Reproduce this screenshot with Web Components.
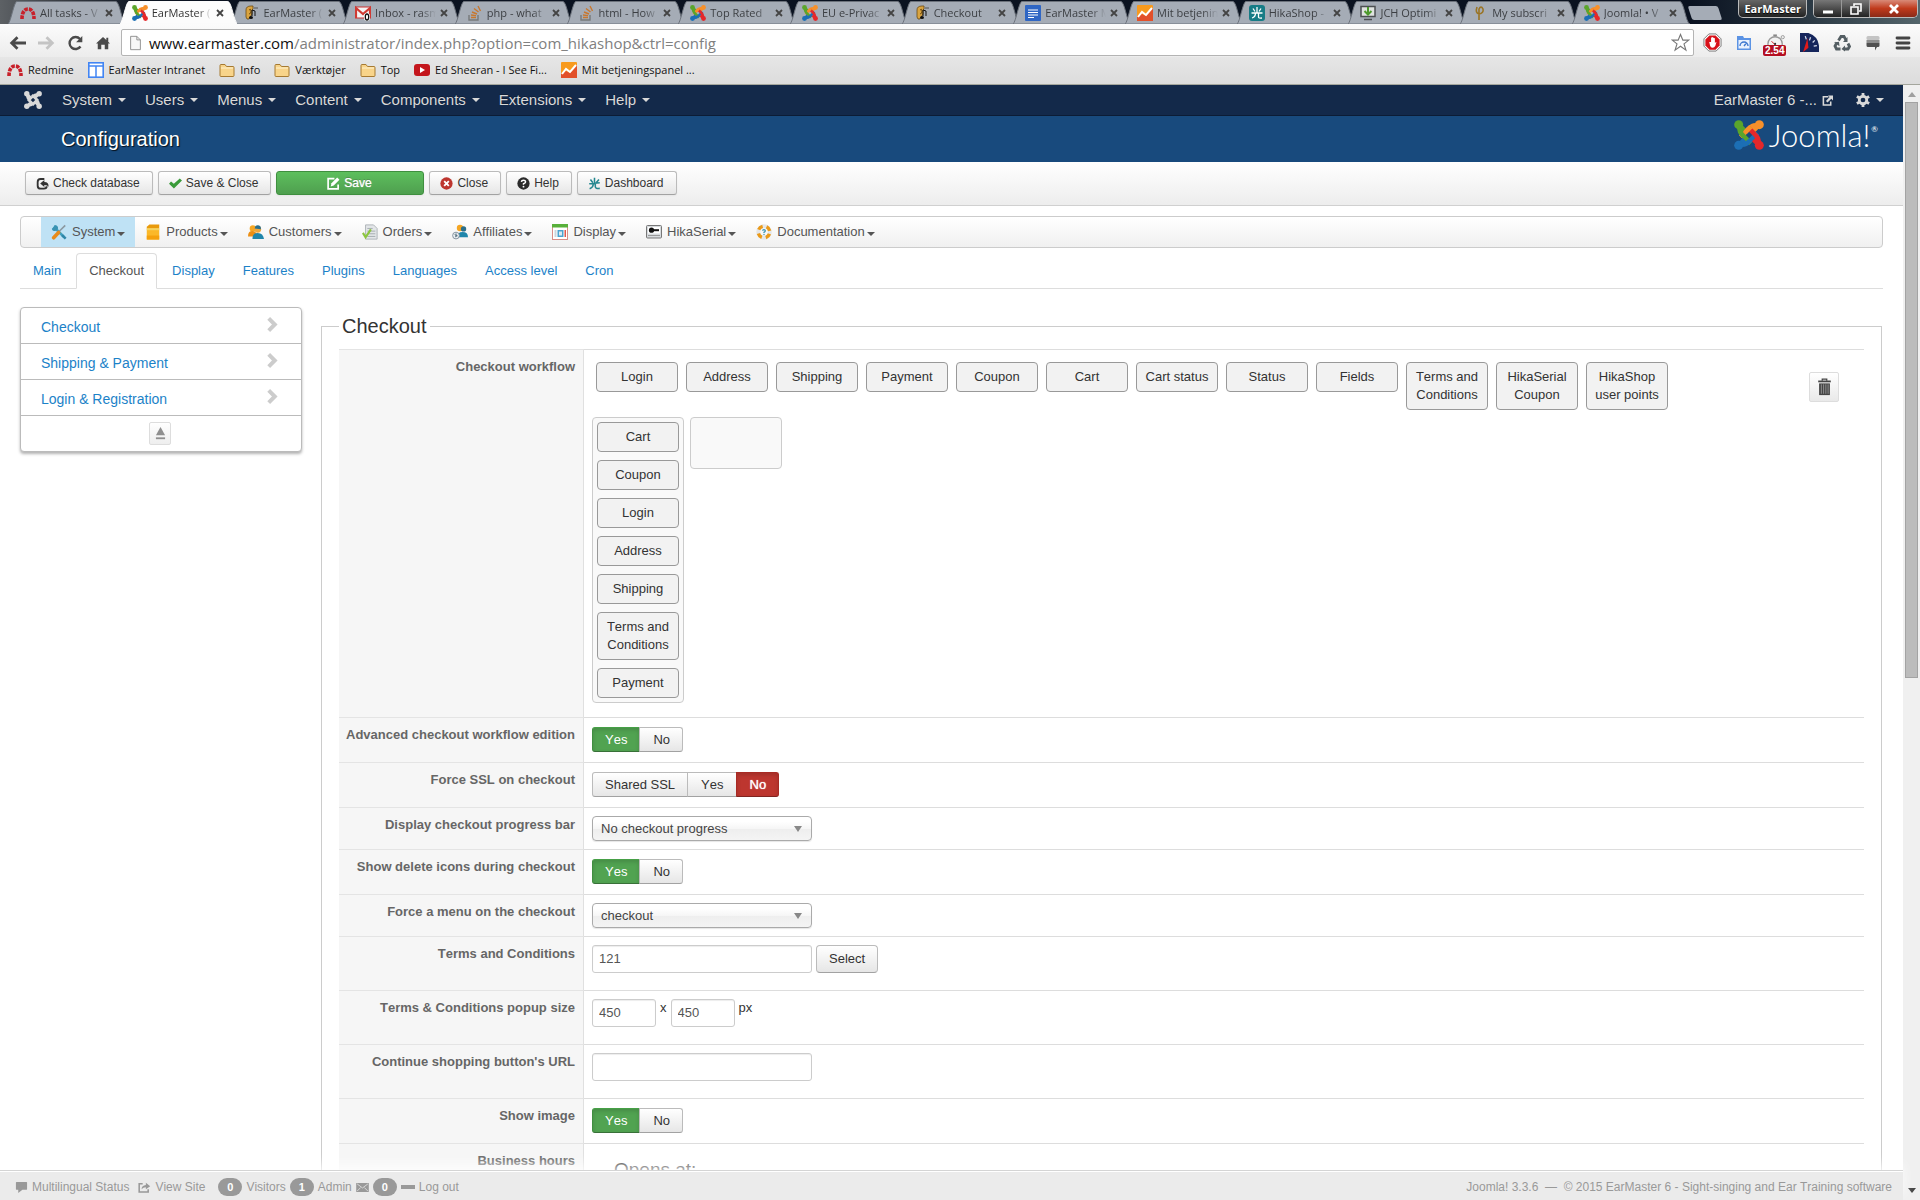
<!DOCTYPE html>
<html lang="en">
<head>
<meta charset="utf-8">
<title>Configuration - EarMaster - Administration</title>
<style>
html,body{margin:0;height:100%}
body{background:#fff;color:#333;font:13px/18px "Liberation Sans",Arial,sans-serif;font-kerning:none;overflow:hidden}
</style>
</head>
<body>
<admin-app></admin-app>
<script>
const ICONS = {
  joomla: ['0 0 32 32', '<g fill="none" stroke-width="5"><g stroke="#f7902a"><path d="M27 5L21 11M26 6C20 5 18 7 15 10L7 18"/></g><g stroke="#5aa52b"><path d="M5 5L11 11M6 6C5 12 7 14 10 17L18 25"/></g><g stroke="#1c6fb5"><path d="M5 27L11 21M6 26C12 27 14 25 17 22L25 14"/></g><g stroke="#e4282b"><path d="M27 27L21 21M26 26C27 20 25 18 22 15L15 8"/></g><path d="M18 7L12 13" stroke="#f7902a"/></g><circle cx="5" cy="5" r="4.800" fill="#5aa52b"/><circle cx="27" cy="5" r="4.800" fill="#f7902a"/><circle cx="27" cy="27" r="4.800" fill="#e4282b"/><circle cx="5" cy="27" r="4.800" fill="#1c6fb5"/>'],
  joomlaMono: ['0 0 32 32', '<g fill="none" stroke="currentColor" stroke-width="4.400"><path d="M5 5L11 11M5 27L11 21M27 27L21 21M27 5L21 11M6 6C5 12 7 14 10 17L18 25M6 26C12 27 14 25 17 22L25 14M26 26C27 20 25 18 22 15L14 7M26 6C20 5 18 7 15 10L7 18"/></g><g fill="currentColor"><circle cx="5" cy="5" r="4.800"/><circle cx="27" cy="5" r="4.800"/><circle cx="27" cy="27" r="4.800"/><circle cx="5" cy="27" r="4.800"/></g>'],
  redmine: ['0 0 16 16', '<path d="M2 14C2 8 4 4 8 4s6 4 6 10" fill="none" stroke="#c8202a" stroke-width="3.600" stroke-dasharray="3.600 1"/>'],
  ear: ['0 0 16 16', '<path d="M3 12V5Q3 1 8 1h2v3l-1 1v4l-3 5H4z" fill="#d9a441" stroke="#6b4a12" stroke-width=".8"/><path d="M6 5q2-2 2 1t-2 3" fill="none" stroke="#6b4a12"/><path d="M9 5v6M9 5l3 1v5" fill="none" stroke="#111"/><ellipse cx="8" cy="12.500" rx="2" ry="1.500" fill="#111"/><path d="M11 3h4" stroke="#555"/>'],
  gmail: ['0 0 16 16', '<rect y="2" width="16" height="11" fill="#f4f4f4" stroke="#c33" /><path d="M1 13V3l7 6 7-6v10" fill="none" stroke="#cf3a33" stroke-width="2.2"/><rect x="9" y="8" width="6" height="8" rx="3" fill="#fff"/><ellipse cx="12" cy="12" rx="1.700" ry="3" fill="#fff" stroke="#111" stroke-width="1.300"/>'],
  stack: ['0 0 16 16', '<path d="M2 10v5h9v-5" fill="none" stroke="#77797b" stroke-width="1.400"/><path d="M4 12.500h5M4 10l5 .6M5 7l5 2M7 3.500l4.500 3.500M11 1l2.500 5" stroke="#c8772e" stroke-width="1.400"/>'],
  docs: ['0 0 16 16', '<rect width="16" height="16" rx="1" fill="#2f66c4"/><path d="M3 5h10M3 7.500h10M3 10h10M3 12.500h6" stroke="#fff" stroke-width="1.200"/>'],
  analytics: ['0 0 16 16', '<rect width="16" height="16" rx="1" fill="#f79a1e"/><path d="M0 12l5-3 4 2 7-8v13H0z" fill="#e2502a"/><path d="M1 12l4-5 4 3 6-7" fill="none" stroke="#fff" stroke-width="2"/>'],
  hika: ['0 0 16 16', '<rect width="16" height="16" rx="3" fill="#177c86"/><path d="M8 2v6M2.500 8h11M4 3.500l2 3M12 3.500l-2 3M6.500 8q0 4-3.500 5M9.500 8v4q0 1.500 3.500 1" fill="none" stroke="#fff" stroke-width="1.300"/>'],
  hikaPlain: ['0 0 16 16', '<path d="M8 1v7M1.500 8.200L14.500 7M3 3l3 4M13.500 3L10 7M6.500 8q0 5-4.500 6.500M9 8v4q0 2.500 5.500 2" fill="none" stroke="#23878f" stroke-width="1.900"/>'],
  jch: ['0 0 16 16', '<rect x="1" y="1.500" width="14" height="10" fill="#dfe3e0" stroke="#4c4f52" stroke-width="1.500"/><path d="M4 14.500h8" stroke="#4c4f52" stroke-width="1.500"/><path d="M8 2v7M4.500 6L8 9.500 11.500 6" fill="none" stroke="#4d9a2c" stroke-width="2"/>'],
  gold: ['0 0 16 16', '<path d="M7 15V7M5 2q-2 6 2 7 5-1 4-5Q9 0 7 4v8" fill="none" stroke="#9a7424" stroke-width="1.600"/>'],
  doc: ['0 0 14 18', '<path d="M1.500 1.500h7l4 4v11h-11z" fill="#f7f7f7" stroke="#888"/><path d="M8.500 1.500v4h4" fill="none" stroke="#888"/>'],
  site: ['0 0 16 16', '<rect x=".8" y=".8" width="14.400" height="14.400" fill="#fff" stroke="#4285f4" stroke-width="1.600"/><path d="M1 4h14M8 4v11" stroke="#4285f4" stroke-width="1.500"/>'],
  folder: ['0 0 16 16', '<path d="M1 3.500q0-1 1-1h4l1.500 2H14q1 0 1 1v8q0 1-1 1H2q-1 0-1-1z" fill="#f8d48a" stroke="#a67a32"/><path d="M2 6h12" stroke="#fff2cf"/>'],
  youtube: ['0 0 16 16', '<rect y="2" width="16" height="12" rx="3" fill="#c4161c"/><path d="M6 5l5 3-5 3z" fill="#fff"/>'],
  back: ['0 0 16 14', '<path d="M16 7H3M8 1.500L2.500 7 8 12.500" fill="none" stroke="currentColor" stroke-width="2.600"/>'],
  forward: ['0 0 16 14', '<path d="M0 7h13M8 1.500L13.500 7 8 12.500" fill="none" stroke="currentColor" stroke-width="2.600"/>'],
  reload: ['0 0 16 16', '<path d="M13 11.500A6 6 0 1 1 12.500 4" fill="none" stroke="currentColor" stroke-width="2.400"/><path d="M14.800 1v6.200H8.600z" fill="currentColor"/>'],
  home: ['0 0 16 16', '<path d="M8 1L0 8.500h2V15h4v-5h4v5h4V8.500h2L14 6.500V2h-2.200v2.500z" fill="currentColor"/>'],
  star: ['0 0 20 20', '<path d="M10 1.500l2.500 6h6.200l-5 4 2 6.500-5.700-4-5.700 4 2-6.500-5-4h6.200z" fill="#fff" stroke="#777" stroke-width="1.200"/>'],
  adblock: ['0 0 20 20', '<path d="M6.200 1h7.600L19 6.200v7.600L13.800 19H6.200L1 13.800V6.200z" fill="#fff" stroke="#777"/><path d="M6.800 2.500h6.400l4.300 4.300v6.400l-4.300 4.300H6.800l-4.300-4.300V6.800z" fill="#d8121a"/><path d="M6.500 9.500l1 4q.5 2 2.500 2t3-2l1.200-4-1.700.8V5.500L11 5l-1-.8L8.500 5v4.500z" fill="#fff"/>'],
  speed: ['0 0 16 16', '<path d="M1 1h6l1 2h7v12H1z" fill="#5b93e4"/><rect x="2.500" y="5" width="11" height="8.500" fill="#e9f1fd"/><path d="M4 11a4 4 0 0 1 8 0M8 11l2.500-3" fill="none" stroke="#3d78cf" stroke-width="1.400"/>'],
  stopwatch: ['0 0 20 20', '<circle cx="9" cy="11" r="8" fill="#f2f2f2" stroke="#999" stroke-width="1.500"/><circle cx="17.500" cy="3.500" r="1.800" fill="#eee" stroke="#999"/><path d="M7 1.500h4" stroke="#888" stroke-width="2"/><path d="M9 12L5 8" stroke="#c11"/><circle cx="9" cy="11" r="1.200" fill="#333"/>'],
  gauge: ['0 0 18 18', '<path d="M0 0h8q9 3 10 12v6H0z" fill="#16265c"/><path d="M3 18L7 5l1 9z" fill="#e01a1a"/><path d="M5 3l1 3M10 4l-1 3M14 7l-2 2M16 12l-3 .5" stroke="#d8deee" stroke-width="1.200"/>'],
  recycle: ['0 0 18 18', '<g fill="none" stroke="#545e63" stroke-width="2.800"><path d="M5.500 6.500L8 2.500h3L13 6"/><path d="M15 9.500l1.500 3-1.500 2.500h-4"/><path d="M7.500 15H3.500L2 12l2-3.500"/></g><path d="M14.500 3v5H10zM12 11.500v6L8.500 15zM1 8.500l5-.8.500 4.500z" fill="#545e63"/>'],
  bubble: ['0 0 14 16', '<rect x=".5" y="1" width="13" height="4" rx="1.500" fill="#c4c4c4"/><rect x=".5" y="5" width="13" height="3" fill="#8e8e8e"/><path d="M.5 8h13v2.500q0 1.500-1.500 1.500h-1l-2 3.500V12H2Q.5 12 .5 10.500z" fill="#505050"/>'],
  menu: ['0 0 14 14', '<path d="M1 2h12M1 7h12M1 12h12" stroke="#444" stroke-width="2.800" stroke-linecap="round"/>'],
  external: ['0 0 12 12', '<path d="M7 2H1.500v9h8V7" fill="none" stroke="currentColor" stroke-width="1.700"/><path d="M6.500.5H12V6l-1.800-1.800L6 8.200 4.300 6.500 8.300 2.300z" fill="currentColor"/>'],
  gear: ['0 0 16 16', '<circle cx="8" cy="8" r="4.300" fill="none" stroke="currentColor" stroke-width="3.200"/><path d="M8 0v3M8 13v3M1 4l2.600 1.500M12.400 10.500L15 12M1 12l2.600-1.500M12.400 5.500L15 4" stroke="currentColor" stroke-width="3.200"/>'],
  database: ['0 0 14 14', '<path d="M9 2.200H5Q1.800 2.200 1.800 5.500v3.800q0 3.200 3.200 3.200h3.500q3 0 3-2.500" fill="none" stroke="currentColor" stroke-width="2"/><path d="M4.500 7L9 3.200V5.500q5 .2 4.500 5Q12.500 8.500 9 8.500v2.400z" fill="currentColor"/>'],
  check: ['0 0 14 14', '<path d="M0 7.200l2.200-2.400L5.200 7.200 11.600 1.500 14 3.800 5.300 12.500z" fill="#3a9b3a"/>'],
  edit: ['0 0 14 14', '<path d="M12 8v4.800H1.200V1.800H8" fill="none" stroke="#fff" stroke-width="1.800"/><path d="M4 10.200l.8-3.400L11 .6l2.400 2.400-6.200 6.200z" fill="#fff"/>'],
  cancel: ['0 0 14 14', '<circle cx="7" cy="7" r="6.600" fill="#bd362f"/><path d="M4.500 4.500l5 5M9.500 4.500l-5 5" stroke="#fff" stroke-width="2"/>'],
  help: ['0 0 14 14', '<circle cx="7" cy="7" r="6.600" fill="#2b2b2b"/><path d="M4.700 5.300Q4.900 3.400 7 3.400t2.300 1.800Q9.300 6.500 7 7.300v1" fill="none" stroke="#fff" stroke-width="1.600"/><circle cx="7" cy="10.400" r="1" fill="#fff"/>'],
  tools: ['0 0 18 18', '<path d="M3 3l12 12" stroke="#3f9fbd" stroke-width="3"/><path d="M1 5l2-1 1-3q4 0 4 4L5 8q-4 0-4-3z" fill="#3a93b3"/><path d="M16 1.500L9 8.500" stroke="#8b98a0" stroke-width="1.800"/><path d="M8.500 9.500L3 15.500" stroke="#e88b1a" stroke-width="4" stroke-linecap="round"/><path d="M13.500 11.500l4 4-2 2-4-4z" fill="#2f86a8"/>'],
  box: ['0 0 16 18', '<path d="M1 3l3-2.500h11V5H1z" fill="#e99a0b"/><path d="M1 5h14v12.500H1z" fill="#fbb829"/><path d="M1 5h14v2H1z" fill="#f4d35e"/><path d="M1 13h14v4.500H1z" fill="#f5a10d"/>'],
  people: ['0 0 18 18', '<circle cx="5.500" cy="5" r="3.600" fill="#f5a623"/><path d="M0 14q0-6 5-6t5 6z" fill="#ec8f14"/><circle cx="11" cy="6" r="3.800" fill="#f0a83c"/><path d="M7.500 5q.5-4 4-3.500T14.500 6z" fill="#2b6f8c"/><path d="M5 17q0-7 6-7t7 7z" fill="#1f86ab"/>'],
  orders: ['0 0 18 18', '<path d="M4 1h9l4 4v12H4z" fill="#e3e6e8" stroke="#a9afb3"/><path d="M6 5h6M6 8h9M6 11h9M6 14h9" stroke="#9fa7ac"/><path d="M1 10l3 5 6-9" fill="none" stroke="#8cc63f" stroke-width="2.400"/>'],
  affiliates: ['0 0 18 18', '<circle cx="9" cy="4.500" r="3.600" fill="#f5a623"/><circle cx="13" cy="5.500" r="3" fill="#2b6f8c"/><path d="M6 15q0-6 6-6t6 6z" fill="#1f86ab"/><circle cx="4.500" cy="13" r="3.800" fill="#e9eef2" stroke="#7b8a96"/><path d="M5.500 11.500q-2-.8-2 .5t2 1-2 1.500" fill="none" stroke="#45606f"/>'],
  display: ['0 0 16 16', '<rect x=".5" y="1" width="15" height="14.500" fill="#fff" stroke="#d98d86"/><path d="M0 0h16v3.500H0z" fill="#58b03a"/><path d="M2.500 6h2v7h-2z" fill="#cdd6dc"/><path d="M5.500 6h6v7h-6z" fill="#4aa3d0"/><path d="M12.500 6h1.500v7h-1.500z" fill="#e0584c"/><path d="M7 7.500h3v4H7z" fill="#dceaf2"/>'],
  serial: ['0 0 16 14', '<rect x=".5" y=".5" width="15" height="12.500" rx="1" fill="#d6dadd" stroke="#777"/><path d="M2 2h12v6.500H2z" fill="#fff"/><circle cx="5.500" cy="5.200" r="2.600" fill="#111"/><path d="M7 4.200h6v2H7z" fill="#111"/><path d="M2 10.500h12" stroke="#999"/>'],
  lifebuoy: ['0 0 16 16', '<circle cx="8" cy="8" r="5.800" fill="none" stroke="#e4e6e8" stroke-width="4"/><circle cx="8" cy="8" r="5.800" fill="none" stroke="#eb9a17" stroke-width="3.400" stroke-dasharray="5 4.110" stroke-dashoffset="-2"/><path d="M6.700 6.800q0-1.200 1.300-1.200t1.300 1.100T8 8.300v.8" fill="none" stroke="#3a93b3" stroke-width="1.300"/><circle cx="8" cy="10.500" r=".7" fill="#3a93b3"/>'],
  chevron: ['0 0 12 16', '<path d="M3 1.500L9.500 8 3 14.500" fill="none" stroke="#ccc" stroke-width="4.200"/>'],
  eject: ['0 0 12 14', '<path d="M6 0l5 9H1z" fill="#8f8f8f"/><path d="M1 12.200h10" stroke="#8f8f8f" stroke-width="2"/>'],
  trash: ['0 0 14 20', '<path d="M4.500 3V1.200h5V3" fill="none" stroke="#444" stroke-width="1.400"/><path d="M0 2.800h14v2H0z" fill="#444"/><path d="M1 6h12v13H1z" fill="#444"/><path d="M3.500 7v10.500M6 7v10.500M8.500 7v10.500M11 7v10.500" stroke="#aaa" stroke-width=".8"/>'],
  comment: ['0 0 14 14', '<path d="M1.500 1h11q.5 0 .5.500V9q0 .5-.5.500H8L3.500 13V9.500h-2Q1 9.500 1 9V1.500Q1 1 1.500 1z" fill="currentColor"/>'],
  share: ['0 0 14 12', '<path d="M5 2H1.200v9H11V8" fill="none" stroke="currentColor" stroke-width="1.700"/><path d="M3.800 8Q4 3.500 8.500 3.200V.8L13.200 4.500 8.500 8V5.800Q5.500 5.800 3.800 8z" fill="currentColor"/>'],
  mail: ['0 0 14 10', '<path d="M0 0h14v10H0z" fill="currentColor"/><path d="M1 1l6 4.500L13 1M1 9l4-4M13 9L9 5" fill="none" stroke="#ddd" stroke-width="1"/>'],
  minus: ['0 0 14 4', '<path d="M0 0h14v4H0z" fill="currentColor"/>']
};

function define(tag, css, html) {
  customElements.define(tag, class extends HTMLElement {
    constructor() {
      super();
      this.attachShadow({ mode: 'open' });
    }
    connectedCallback() {
      if (this.shadowRoot.childNodes.length) return;
      const t = document.createElement('template');
      const body = typeof html === 'function' ? html(this) : html;
      t.innerHTML = '<style>*{box-sizing:border-box}' + css + '</style>' + body;
      this.shadowRoot.append(t.content.cloneNode(true));
    }
  });
}
const attr = (el, n, d = '') => el.getAttribute(n) ?? d;

define('ui-icon', ':host{display:block;flex:none;width:16px;height:16px}svg{display:block;width:100%;height:100%}',
  el => { const [vb, s] = ICONS[attr(el, 'name')]; return `<svg viewBox="${vb}" aria-hidden="true">${s}</svg>`; });

/* ---------- browser chrome ---------- */
define('browser-tab', `
:host{display:flex;flex:1 1 0;min-width:0;height:24px;position:relative;color:#3c3f43;font:11px/14px "Open Sans","Noto Sans",sans-serif}
:host([active]){color:#333;z-index:2}
.shape{position:absolute;inset:0 -6px 0 0;width:calc(100% + 6px);height:100%}
.in{position:relative;display:flex;align-items:center;gap:4px;flex:1;min-width:0;padding:1px 7px 0 12px}
.t{flex:1;min-width:0;overflow:hidden;white-space:nowrap;-webkit-mask-image:linear-gradient(90deg,#000 75%,transparent);mask-image:linear-gradient(90deg,#000 75%,transparent)}
button{all:unset;flex:none;width:8px;height:8px;display:block}
button svg{display:block}`,
  el => `<svg class="shape" viewBox="0 0 120 24" preserveAspectRatio="none"><path d="M0 24C3 22 6 2 9 1.500L110 1.500C114 2 116 22 120 24Z" fill="${el.hasAttribute('active') ? '#fcfcfc' : '#a5acb6'}" stroke="${el.hasAttribute('active') ? '#fcfcfc' : '#6c727b'}"/></svg>
<div class="in"><ui-icon name="${attr(el, 'icon')}"></ui-icon><span class="t"><slot></slot></span><button aria-label="Close tab"><svg width="8" height="8" viewBox="0 0 8 8"><path d="M1 1l6 6M7 1L1 7" stroke="#444" stroke-width="1.800"/></svg></button></div>`);

define('browser-tabs', `
:host{display:flex;height:24px;background:linear-gradient(90deg,#5d6165 0,#3a3e44 3%,#0a1220 8%,#0a1220 88%,#23303c 93%,#55666c)}
.tabs{flex:1;display:flex;padding-left:8px;min-width:0}
.new{width:30px;height:14px;margin:6px 18px 0 7px;background:#a5acb6;border:0;transform:skewX(18deg);border-radius:2px}
.user{all:unset;height:18px;padding:0 5px;color:#fff;font:bold 11px/17px "Open Sans","Noto Sans",sans-serif;border:1px solid #bbb;border-top:0;border-radius:0 0 5px 5px;background:linear-gradient(#666,#222);text-shadow:0 1px 1px #000;box-sizing:border-box}
.win{display:flex;height:18px;margin:0 2px 0 6px;border:1px solid #bbb;border-top:0;border-radius:0 0 5px 5px;overflow:hidden}
.win button{border:0;border-right:1px solid #999;padding:0;width:28px;background:linear-gradient(#777,#222);display:grid;place-items:center}
.win .x{width:47px;border-right:0;background:linear-gradient(#d98a78,#c03a1c 50%,#8a2a18)}`,
`<div class="tabs" role="tablist">
<browser-tab icon="redmine">All tasks - V</browser-tab><browser-tab icon="joomla" active>EarMaster (</browser-tab><browser-tab icon="ear">EarMaster (</browser-tab><browser-tab icon="gmail">Inbox - rasm</browser-tab><browser-tab icon="stack">php - what</browser-tab><browser-tab icon="stack">html - How</browser-tab><browser-tab icon="joomla">Top Rated</browser-tab><browser-tab icon="joomla">EU e-Privac</browser-tab><browser-tab icon="ear">Checkout</browser-tab><browser-tab icon="docs">EarMaster M</browser-tab><browser-tab icon="analytics">Mit betjenin</browser-tab><browser-tab icon="hika">HikaShop -</browser-tab><browser-tab icon="jch">JCH Optimi</browser-tab><browser-tab icon="gold">My subscri</browser-tab><browser-tab icon="joomla">Joomla! • V</browser-tab>
</div><button class="new" aria-label="New tab"></button><button class="user">EarMaster</button>
<div class="win"><button aria-label="Minimize"><svg width="12" height="12"><path d="M1 9h10" stroke="#fff" stroke-width="3"/></svg></button><button aria-label="Restore"><svg width="12" height="12"><path d="M4 3V1h7v7H9M1 4h7v7H1z" fill="none" stroke="#fff" stroke-width="1.600"/></svg></button><button class="x" aria-label="Close"><svg width="12" height="12"><path d="M2 2l8 8M10 2l-8 8" stroke="#fff" stroke-width="2.800"/></svg></button></div>`);

define('browser-toolbar', `
:host{display:flex;align-items:center;height:33px;padding:4px 9px 0 9px;background:linear-gradient(#fcfcfc,#ececec);color:#4a4a4a}
.nav{display:flex;align-items:center;gap:12px;margin-right:11px}
.nav button,.ext button{all:unset;display:block}
.nav ui-icon{width:17px}
.nav .off{color:#c4c4c4}
.url{flex:1;display:flex;align-items:center;height:27px;border:1px solid #b4b4b4;border-radius:2px;background:#fff;padding:0 3px 0 7px;margin-right:9px;color:#808080;font:15px/20px "Open Sans","Noto Sans",sans-serif}
.url b{font-weight:400;color:#111}
.url span{flex:1;margin-left:7px;white-space:nowrap}
.ext{display:flex;align-items:center;gap:14px}
.ext .sw{position:relative}
.sw em{position:absolute;left:-3px;top:11px;padding:0 2px;border-radius:2px;background:#b40f22;color:#fff;font:bold 10px/11px "Liberation Sans",sans-serif}`,
`<div class="nav"><button aria-label="Back"><ui-icon name="back"></ui-icon></button><button aria-label="Forward" class="off"><ui-icon name="forward"></ui-icon></button><button aria-label="Reload"><ui-icon name="reload"></ui-icon></button><button aria-label="Home"><ui-icon name="home" style="width:14px"></ui-icon></button></div>
<div class="url"><ui-icon name="doc" style="width:13px"></ui-icon><span><b>www.earmaster.com</b>/administrator/index.php?option=com_hikashop&amp;ctrl=config</span><ui-icon name="star" style="width:19px;height:19px"></ui-icon></div>
<div class="ext"><button aria-label="Ad blocker"><ui-icon name="adblock" style="width:19px;height:19px"></ui-icon></button><button aria-label="Page speed"><ui-icon name="speed"></ui-icon></button><button class="sw" aria-label="Load time"><ui-icon name="stopwatch" style="width:20px;height:18px"></ui-icon><em>2.54</em></button><button aria-label="Gauge"><ui-icon name="gauge" style="width:19px;height:19px"></ui-icon></button><button aria-label="Recycle"><ui-icon name="recycle" style="width:18px;height:18px"></ui-icon></button><button aria-label="Chat"><ui-icon name="bubble"></ui-icon></button><button aria-label="Menu"><ui-icon name="menu" style="height:14px"></ui-icon></button></div>`);

define('bookmark-item', `
:host{display:block}
a{display:flex;align-items:center;gap:5px;color:#111;text-decoration:none;font:11px/16px "Open Sans","Noto Sans",sans-serif;white-space:nowrap}`,
  el => `<a href="#"><ui-icon name="${attr(el, 'icon')}"></ui-icon><slot></slot></a>`);
define('bookmarks-bar', `
:host{display:flex;align-items:center;gap:14px;height:28px;padding:0 7px 2px;background:linear-gradient(#e6e6e6,#dcdcdc);border-bottom:1px solid #a4a69d;box-sizing:border-box}`,
`<bookmark-item icon="redmine">Redmine</bookmark-item><bookmark-item icon="site">EarMaster Intranet</bookmark-item><bookmark-item icon="folder">Info</bookmark-item><bookmark-item icon="folder">Værktøjer</bookmark-item><bookmark-item icon="folder">Top</bookmark-item><bookmark-item icon="youtube">Ed Sheeran - I See Fi...</bookmark-item><bookmark-item icon="analytics">Mit betjeningspanel ...</bookmark-item>`);

define('scroll-bar', `
:host{display:flex;flex-direction:column;width:17px;background:#f0f0f0;align-items:center}
.up,.dn{width:0;height:0;border:4px solid transparent}
.up{border-bottom:5px solid #a0a0a0;border-top:0;margin:7px 0 5px}
.track{flex:1;width:13px}
.thumb{height:53%;background:#bcbcbc;border:1px solid #a3a3a3}
.dn{border-top:5px solid #444;border-bottom:0;margin:0 0 7px}`,
`<span class="up"></span><div class="track"><div class="thumb"></div></div><span class="dn"></span>`);

/* ---------- admin template ---------- */
define('caret-mark', ':host{display:block;flex:none;width:0;height:0;border:4px solid transparent;border-top-color:currentColor;border-bottom:0}', '');

define('nav-item', `
:host{display:block}
a{display:flex;align-items:center;gap:6px;padding:0 9px 0 10px;color:#d9d9d9;text-decoration:none;font-size:15px;line-height:30px;text-shadow:0 -1px 0 rgba(0,0,0,.25)}`,
`<a href="#"><slot></slot><caret-mark></caret-mark></a>`);
define('admin-navbar', `
:host{display:flex;align-items:center;height:31px;padding:0 10px 0 24px;background:#13294a;border-bottom:1px solid #0c1c35;color:#d9d9d9}
.brand ui-icon{width:18px;height:18px}
.brand{color:inherit;margin-right:10px}
nav{display:flex;flex:1}
.site{display:flex;align-items:center;gap:5px;color:#d9d9d9;text-decoration:none;font-size:15px;margin-right:13px}`,
`<a class="brand" href="#" aria-label="Joomla"><ui-icon name="joomlaMono"></ui-icon></a>
<nav><nav-item>System</nav-item><nav-item>Users</nav-item><nav-item>Menus</nav-item><nav-item>Content</nav-item><nav-item>Components</nav-item><nav-item>Extensions</nav-item><nav-item>Help</nav-item></nav>
<a class="site" href="#">EarMaster 6 -... <ui-icon name="external" style="width:11px;height:11px"></ui-icon></a>
<nav-item><ui-icon name="gear" style="width:14px;height:14px"></ui-icon></nav-item>`);

define('page-header', `
:host{display:flex;align-items:center;justify-content:space-between;height:46px;padding:0 25px 0 61px;background:#184a7d}
h1{margin:0;color:#fff;font-size:20px;line-height:28px;font-weight:400;text-shadow:1px 1px 1px rgba(0,0,0,.8)}
.logo{display:flex;align-items:center;gap:5px;color:#fff;padding-bottom:8px}
.w{font:300 31px/32px Lato,"Open Sans",sans-serif}
sup{font:8px/8px Lato,sans-serif;align-self:flex-start;margin:6px 0 0 -4px}`,
`<h1>Configuration</h1><div class="logo"><ui-icon name="joomla" style="width:30px;height:30px"></ui-icon><span class="w">Joomla!</span><sup>®</sup></div>`);

define('tool-button', `
:host{display:block}
button{display:flex;align-items:center;justify-content:center;gap:4px;width:100%;height:24px;padding:0 12px 0 10px;border:1px solid #bbb;border-bottom-color:#a2a2a2;border-radius:3px;background:linear-gradient(#fff,#e6e6e6);color:#333;font:12px/18px "Liberation Sans",Arial,sans-serif;box-shadow:0 1px 2px rgba(0,0,0,.05)}
:host([primary]){width:148px}
:host([primary]) button{background:linear-gradient(#5dbf5d,#4f9f4f);border-color:#3f8f3f;color:#fff;text-shadow:0 -1px 0 rgba(0,0,0,.25),0 0 1px #fff}
ui-icon{width:13px;height:13px}`,
  el => `<button><ui-icon name="${attr(el, 'icon')}"></ui-icon><span><slot></slot></span></button>`);
define('tool-bar', `
:host{display:flex;gap:5px;height:44px;padding:9px 25px 0;background:linear-gradient(#fff,#ededed);border-bottom:1px solid #d0d0d0;box-sizing:border-box}`,
`<tool-button icon="database">Check database</tool-button><tool-button icon="check">Save &amp; Close</tool-button><tool-button icon="edit" primary>Save</tool-button><tool-button icon="cancel">Close</tool-button><tool-button icon="help">Help</tool-button><tool-button icon="hikaPlain">Dashboard</tool-button>`);

define('shop-menu-item', `
:host{display:block}
a{display:flex;align-items:center;height:30px;padding:0 10px;color:#555;text-decoration:none}
:host([active]) a{background:#bfe2f5}
ui-icon{width:16px;height:16px;margin-right:5px}
caret-mark{margin:3px 0 0 2px}`,
  el => `<a href="#"><ui-icon name="${attr(el, 'icon')}"></ui-icon><slot></slot><caret-mark></caret-mark></a>`);
define('shop-menu', `
:host{display:flex;border:1px solid #ccc;border-radius:4px;padding-left:20px;background:linear-gradient(#fff,#f0f0f0)}`,
`<shop-menu-item icon="tools" active>System</shop-menu-item><shop-menu-item icon="box">Products</shop-menu-item><shop-menu-item icon="people">Customers</shop-menu-item><shop-menu-item icon="orders">Orders</shop-menu-item><shop-menu-item icon="affiliates">Affiliates</shop-menu-item><shop-menu-item icon="display">Display</shop-menu-item><shop-menu-item icon="serial">HikaSerial</shop-menu-item><shop-menu-item icon="lifebuoy">Documentation</shop-menu-item>`);

define('config-tab', `
:host{display:block;margin:0 2px -1px 0}
a{display:block;padding:8px 12px;border:1px solid transparent;border-radius:4px 4px 0 0;color:#1c82c8;text-decoration:none;height:36px}
:host([active]) a{color:#555;border-color:#ddd;border-bottom-color:#fff;background:#fff}`,
`<a href="#"><slot></slot></a>`);
define('config-tabs', ':host{display:flex;border-bottom:1px solid #ddd;margin-top:5px}',
`<config-tab>Main</config-tab><config-tab active>Checkout</config-tab><config-tab>Display</config-tab><config-tab>Features</config-tab><config-tab>Plugins</config-tab><config-tab>Languages</config-tab><config-tab>Access level</config-tab><config-tab>Cron</config-tab>`);

define('side-link', `
:host{display:block;border-bottom:1px solid #bbb}
a{display:flex;justify-content:space-between;height:35px;padding:9px 23px 0 20px;color:#1c82c8;text-decoration:none;font-size:14px;line-height:20px}
ui-icon{width:13px;height:15px}`,
`<a href="#"><slot></slot><ui-icon name="chevron"></ui-icon></a>`);
define('side-menu', `
:host{display:block;width:282px;flex:none;border:1px solid #bbb;border-radius:4px;box-shadow:0 2px 3px rgba(0,0,0,.3);background:#fff;box-sizing:border-box}
.top{display:flex;justify-content:center;padding:6px 2px 6px 0}
button{display:grid;place-items:center;width:22px;height:23px;padding:0;border:1px solid #ddd;border-radius:2px;background:linear-gradient(#fff,#eee)}
ui-icon{width:11px;height:13px}`,
`<side-link>Checkout</side-link><side-link>Shipping &amp; Payment</side-link><side-link>Login &amp; Registration</side-link><div class="top"><button aria-label="Back to top"><ui-icon name="eject"></ui-icon></button></div>`);

define('flow-step', `
:host{display:block;width:82px;flex:none;padding:5px 0;border:1px solid #999;border-radius:4px;background:#f2f2f2;color:#333;text-align:center;box-sizing:border-box;cursor:move}`, '<slot></slot>');
define('flow-group', `
:host{display:flex;flex-direction:column;gap:8px;width:92px;min-height:52px;padding:4px;border:1px solid #ccc;border-radius:4px;background:#f9f9f9;box-sizing:border-box}`, '<slot></slot>');
define('checkout-workflow', `
:host{display:block;padding:4px 0 6px}
.pal{display:flex;gap:8px;align-items:flex-start;padding-left:4px;height:55px}
.grp{display:flex;gap:6px;align-items:flex-start}
button{margin:10px 17px 0 auto;display:grid;place-items:center;width:30px;height:30px;padding:0;border:1px solid #ddd;border-radius:2px;background:linear-gradient(#fff,#e9e9e9)}
ui-icon{width:13px;height:18px}`,
`<div class="pal"><flow-step>Login</flow-step><flow-step>Address</flow-step><flow-step>Shipping</flow-step><flow-step>Payment</flow-step><flow-step>Coupon</flow-step><flow-step>Cart</flow-step><flow-step>Cart status</flow-step><flow-step>Status</flow-step><flow-step>Fields</flow-step><flow-step>Terms and Conditions</flow-step><flow-step>HikaSerial Coupon</flow-step><flow-step>HikaShop user points</flow-step><button aria-label="Delete"><ui-icon name="trash"></ui-icon></button></div>
<div class="grp"><flow-group><flow-step>Cart</flow-step><flow-step>Coupon</flow-step><flow-step>Login</flow-step><flow-step>Address</flow-step><flow-step>Shipping</flow-step><flow-step>Terms and Conditions</flow-step><flow-step>Payment</flow-step></flow-group><flow-group></flow-group></div>`);

define('choice-switch', `
:host{display:flex;padding-top:1px}
label{display:block;position:relative;height:25px;padding:3px 12px 0 13px;border:1px solid #bbb;border-bottom-color:#a2a2a2;margin-left:-1px;background:linear-gradient(#fff,#e6e6e6);color:#333}
label:first-of-type{border-radius:3px 0 0 3px;margin-left:0;padding-left:12px}
label:last-of-type{border-radius:0 3px 3px 0}
label:has(:checked){background:#51a351;border-color:#46a046 #408f40 #387038;color:#fff;box-shadow:inset 0 2px 4px rgba(0,0,0,.15)}
label.no:has(:checked){background:#bd362f;border-color:#a82a24 #a82a24 #802420;text-shadow:0 0 1px #fff}
input{position:absolute;opacity:0;width:1px;height:1px;margin:0}`,
  el => attr(el, 'options').split(',').map(o => `<label class="${o === 'No' ? 'no' : ''}"><input type="radio" name="c"${o === attr(el, 'value') ? ' checked' : ''}>${o}</label>`).join(''));

define('setting-row', `
:host{display:flex;border-top:1px solid #ddd}
.l{width:245px;flex:none;background:#f6f6f6;border-right:1px solid #e0e0e0;padding:8px 8px 0 4px;text-align:right;margin-top:-1px;border-top:1px solid #e4e4e4;white-space:nowrap}
.c{flex:1;min-width:0;padding:8px}
:host([roomy]) .c{padding-bottom:17px}
:host([switchy]) .c{padding:8px 8px 10px}`,
`<div class="l"><slot name="label"></slot></div><div class="c"><slot></slot></div>`);

define('checkout-form', `
:host{display:block;flex:1;min-width:0}
fieldset{margin:0;border:1px solid #ccc;padding:12px 17px 0;min-width:0}
legend{padding:0 3px;font-size:20px;line-height:22px;color:#333}
label,.lab{font-weight:700;color:#666}
.line{display:flex;align-items:flex-start;gap:4px}
input{height:28px;width:220px;padding:0 6px 1px;border:1px solid #ccc;border-radius:3px;color:#555;font:13px/18px "Liberation Sans",Arial,sans-serif;box-shadow:inset 0 1px 1px rgba(0,0,0,.075)}
input.s{width:64px}
select{appearance:none;display:block;width:220px;height:25px;padding:0 8px;border:1px solid #aaa;border-radius:4px;color:#444;font:13px/18px "Liberation Sans",Arial,sans-serif;background:url('data:image/svg+xml,<svg xmlns="http://www.w3.org/2000/svg" width="8" height="6"><path d="M0 0h8l-4 6z" fill="%23888"/></svg>') no-repeat right 9px center,linear-gradient(#fff 20%,#f6f6f6 50%,#eee 52%,#f4f4f4);box-shadow:0 1px 1px rgba(0,0,0,.1)}
button{height:28px;padding:0 12px;border:1px solid #bbb;border-bottom-color:#a2a2a2;border-radius:4px;background:linear-gradient(#fff,#e6e6e6);color:#333;font:13px/18px "Liberation Sans",Arial,sans-serif}
h3{margin:0;padding:4px 0 0 22px;font-size:19px;line-height:28px;font-weight:400;color:#333}`,
`<fieldset><legend>Checkout</legend>
<setting-row><span class="lab" slot="label">Checkout workflow</span><checkout-workflow></checkout-workflow></setting-row>
<setting-row switchy><span class="lab" slot="label">Advanced checkout workflow edition</span><choice-switch role="radiogroup" aria-label="Advanced checkout workflow edition" options="Yes,No" value="Yes"></choice-switch></setting-row>
<setting-row switchy><span class="lab" slot="label">Force SSL on checkout</span><choice-switch role="radiogroup" aria-label="Force SSL on checkout" options="Shared SSL,Yes,No" value="No"></choice-switch></setting-row>
<setting-row><label slot="label" for="bar">Display checkout progress bar</label><select id="bar"><option>No checkout progress</option></select></setting-row>
<setting-row switchy><span class="lab" slot="label">Show delete icons during checkout</span><choice-switch role="radiogroup" aria-label="Show delete icons during checkout" options="Yes,No" value="Yes"></choice-switch></setting-row>
<setting-row><label slot="label" for="menu">Force a menu on the checkout</label><select id="menu"><option>checkout</option></select></setting-row>
<setting-row roomy><label slot="label" for="terms">Terms and Conditions</label><div class="line"><input id="terms" value="121"><button>Select</button></div></setting-row>
<setting-row roomy><label slot="label" for="pw">Terms &amp; Conditions popup size</label><div class="line"><input class="s" id="pw" value="450"><span>x</span><input class="s" aria-label="Popup height" value="450"><span>px</span></div></setting-row>
<setting-row roomy><label slot="label" for="url">Continue shopping button's URL</label><div class="line"><input id="url"></div></setting-row>
<setting-row switchy><span class="lab" slot="label">Show image</span><choice-switch role="radiogroup" aria-label="Show image" options="Yes,No" value="Yes"></choice-switch></setting-row>
<setting-row><span class="lab" slot="label">Business hours</span><h3>Opens at:</h3></setting-row>
</fieldset>`);

define('status-bar', `
:host{display:flex;position:relative;z-index:1;justify-content:space-between;align-items:center;height:30px;box-sizing:border-box;flex:none;padding:3px 11px 0 15px;border-top:1px solid #d4d4d4;background:#ebebeb;color:#999;font-size:12px;line-height:18px;box-shadow:0 -6px 12px rgba(255,255,255,.75),inset 0 1px 0 #fff}
.g{display:flex;align-items:center;gap:4px}
a{display:flex;align-items:center;gap:4px;color:inherit;text-decoration:none;margin-right:5px}
b{min-width:24px;height:18px;border-radius:9px;background:#999;color:#fff;text-align:center;font-size:11px;line-height:18px}
.v{margin-left:4px}`,
`<div class="g"><a href="#"><ui-icon name="comment" style="width:13px;height:13px"></ui-icon>Multilingual Status</a><a href="#"><ui-icon name="share" style="width:13px;height:11px"></ui-icon>View Site</a><b class="v">0</b><span>Visitors</span><b>1</b><span>Admin</span><ui-icon name="mail" style="width:13px;height:9px"></ui-icon><b>0</b><a href="#"><ui-icon name="minus" style="width:14px;height:4px"></ui-icon>Log out</a></div><div>Joomla! 3.3.6 &nbsp;—&nbsp; © 2015 EarMaster 6 - Sight-singing and Ear Training software</div>`);

define('admin-app', `
:host{display:flex;flex-direction:column;height:100vh;overflow:hidden}
.view{flex:1;display:flex;min-height:0}
.page{flex:1;min-width:0;display:flex;flex-direction:column}
.body{flex:1;min-height:0;overflow:hidden;padding:10px 20px 0}
.cols{display:flex;align-items:flex-start;gap:19px;margin-top:18px;padding-right:1px}
checkout-form{margin-top:8px}`,
`<browser-tabs></browser-tabs><browser-toolbar></browser-toolbar><bookmarks-bar></bookmarks-bar>
<div class="view"><div class="page"><admin-navbar></admin-navbar><page-header></page-header><tool-bar></tool-bar>
<main class="body"><shop-menu></shop-menu><config-tabs></config-tabs><div class="cols"><side-menu></side-menu><checkout-form></checkout-form></div></main>
<status-bar></status-bar></div><scroll-bar></scroll-bar></div>`);
</script>
</body>
</html>
